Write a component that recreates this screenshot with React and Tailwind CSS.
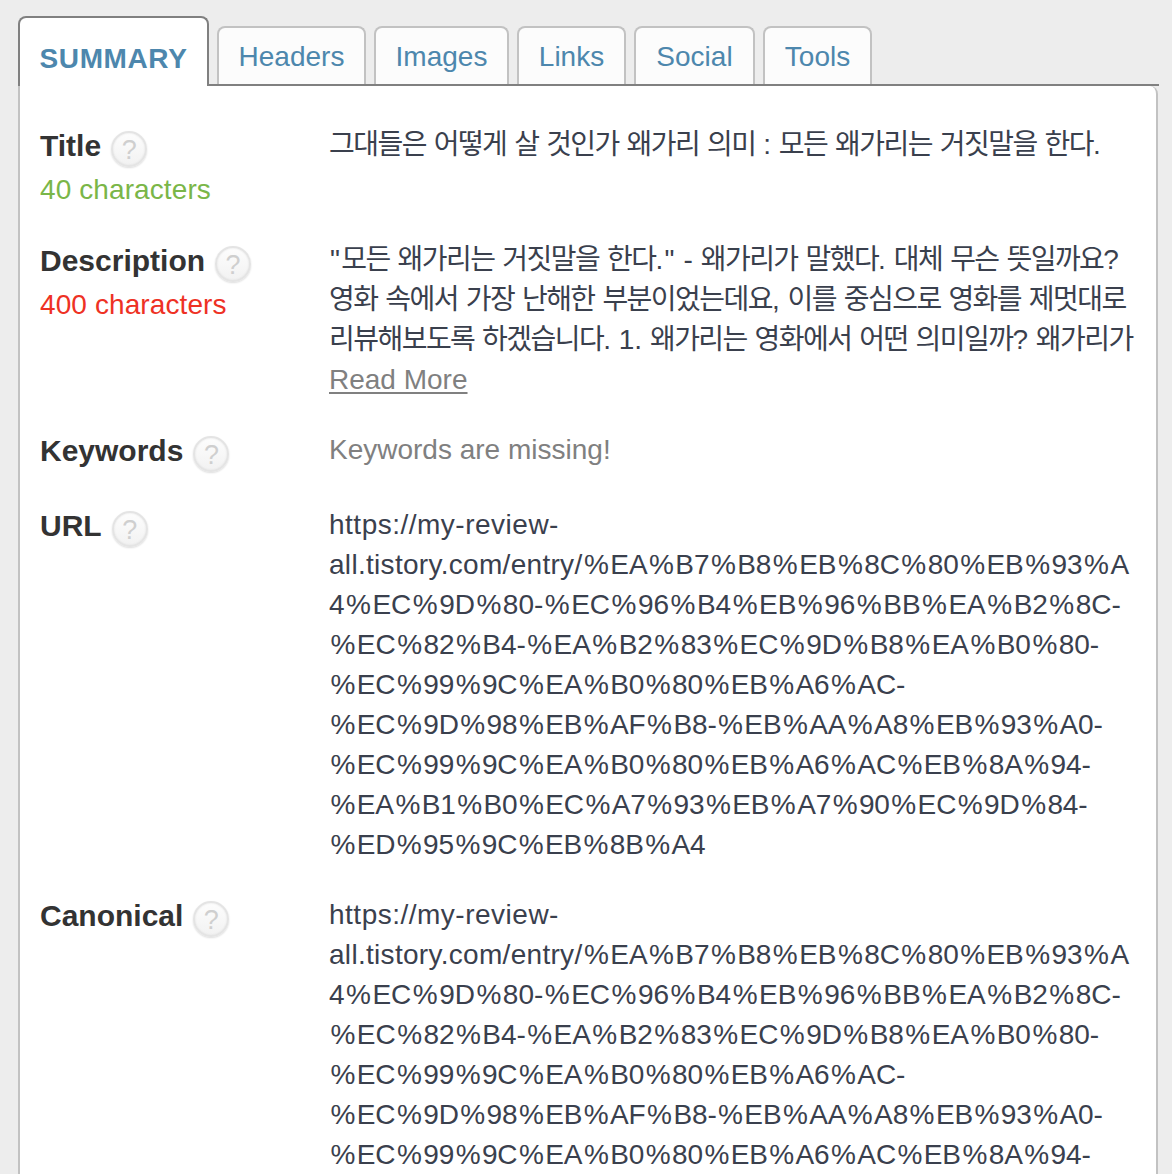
const tabs = [
  { name: 'Headers', width: 'w-[149px]' },
  { name: 'Images', width: 'w-[135px]' },
  { name: 'Links', width: 'w-[109px]' },
  { name: 'Social', width: 'w-[121px]' },
  { name: 'Tools', width: 'w-[109px]' },
]

const titleLines = [
  {
    text: '그대들은 어떻게 살 것인가 왜가리 의미 : 모든 왜가리는 거짓말을 한다.',
  },
]

const descriptionLines = [
  {
    text: '"모든 왜가리는 거짓말을 한다." - 왜가리가 말했다. 대체 무슨 뜻일까요?',
    tracking: 'tracking-[0.08px]',
  },
  {
    text: '영화 속에서 가장 난해한 부분이었는데요, 이를 중심으로 영화를 제멋대로',
  },
  {
    text: '리뷰해보도록 하겠습니다. 1. 왜가리는 영화에서 어떤 의미일까? 왜가리가',
  },
]

const urlLines = [
  { text: 'https://my-review-', tracking: 'tracking-[0.5px]' },
  {
    prefix: 'all.tistory.com/entry/',
    text: '%EA%B7%B8%EB%8C%80%EB%93%A',
    tracking: 'tracking-[-0.08px]',
  },
  {
    text: '4%EC%9D%80-%EC%96%B4%EB%96%BB%EA%B2%8C-',
    tracking: 'tracking-[-0.02px]',
  },
  {
    text: '%EC%82%B4-%EA%B2%83%EC%9D%B8%EA%B0%80-',
    tracking: 'tracking-[-0.06px]',
  },
  { text: '%EC%99%9C%EA%B0%80%EB%A6%AC-', tracking: 'tracking-[-0.12px]' },
  {
    text: '%EC%9D%98%EB%AF%B8-%EB%AA%A8%EB%93%A0-',
    tracking: 'tracking-[-0.13px]',
  },
  {
    text: '%EC%99%9C%EA%B0%80%EB%A6%AC%EB%8A%94-',
    tracking: 'tracking-[-0.12px]',
  },
  {
    text: '%EA%B1%B0%EC%A7%93%EB%A7%90%EC%9D%84-',
    tracking: 'tracking-[-0.12px]',
  },
  { text: '%ED%95%9C%EB%8B%A4', tracking: 'tracking-[-0.15px]' },
]

export default function App() {
  return (
    <div className="h-screen overflow-hidden bg-[#ededed] pl-[18px] pt-4 font-['Liberation_Sans','Noto_Sans_CJK_KR',sans-serif] text-[28px] leading-[40px] text-[#3a404d]">
      {/* Tabs */}
      <nav className="flex h-[70px] w-[1141px] items-end gap-2 border-b-2 border-[#808080] text-[#4d87ad]">
        <a className="relative -mb-0.5 flex h-[70px] w-[191px] shrink-0 items-center justify-center rounded-t-lg border-2 border-b-0 border-[#808080] bg-white pt-3.5 font-bold tracking-[0.6px]">
          SUMMARY
        </a>
        {tabs.map((tab) => (
          <a
            key={tab.name}
            className={`flex h-[58px] shrink-0 items-center justify-center rounded-t-lg border-2 border-b-0 border-[#c2c2c2] bg-[#fcfcfc] pt-0.5 ${tab.width}`}
          >
            {tab.name}
          </a>
        ))}
      </nav>

      {/* Summary panel */}
      <main className="flex h-[1088px] w-[1140px] flex-col gap-[30px] rounded-tr-lg border-x-2 border-[#c2c2c2] bg-white pl-5 pt-[38px]">
        <Row label="Title" note="40 characters" noteColor="text-[#7ab648]">
          <Lines lines={titleLines} />
        </Row>
        <Row
          label="Description"
          note="400 characters"
          noteColor="text-[#ee3124]"
        >
          <Lines lines={descriptionLines} />
          <a className="text-[#808080] underline decoration-2 underline-offset-[3px]">
            Read More
          </a>
        </Row>
        <Row label="Keywords">
          <p className="text-[#808080]">Keywords are missing!</p>
        </Row>
        <Row label="URL">
          <Lines lines={urlLines} />
        </Row>
        <Row label="Canonical">
          <Lines lines={urlLines.slice(0, 7)} />
        </Row>
      </main>
    </div>
  )
}

function Row({ label, note, noteColor, children }) {
  return (
    <section className="flex shrink-0">
      <div className="w-[289px] shrink-0">
        <h2 className="flex h-[45px] gap-2.5 text-[30px] font-bold leading-[44px] text-[#333]">
          {label}
          <HelpIcon />
        </h2>
        {note && (
          <p className={`-mb-px pt-px tracking-[0.1px] ${noteColor}`}>{note}</p>
        )}
      </div>
      <div className="-mb-px pt-px">{children}</div>
    </section>
  )
}

function Lines({ lines }) {
  return lines.map((line) => (
    <p key={line.text} className="whitespace-nowrap">
      {line.prefix && (
        <span className="tracking-[0.3px]">{line.prefix}</span>
      )}
      <span className={line.tracking}>{spaceOut(line.text)}</span>
    </p>
  ))
}

// Hangul is set a little tighter than the font's default,
// percent signs and quotes a little wider
function spaceOut(text) {
  return text.split(/([가-힣]+|%|")/).map((part, i) => {
    if (part === '%') {
      return (
        <span key={i} className="px-[1.5px]">
          %
        </span>
      )
    }
    if (part === '"') {
      return (
        <span key={i} className="px-[1.1px]">
          "
        </span>
      )
    }
    if (/[가-힣]/.test(part)) {
      return (
        <span key={i} className="tracking-[-1.54px]">
          {part}
        </span>
      )
    }
    return part
  })
}

function HelpIcon() {
  return (
    <span className="mt-[7px] flex h-9 w-9 items-center justify-center rounded-full border-2 border-[#e4e4e4] bg-linear-to-b from-[#fdfdfd] to-[#f2f2f2] pt-0.5 text-[27px] font-normal leading-none text-[#cfcfcf] shadow-[0_1px_2px_#ddd,inset_0_0_2px_#e0e0e0]">
      ?
    </span>
  )
}
